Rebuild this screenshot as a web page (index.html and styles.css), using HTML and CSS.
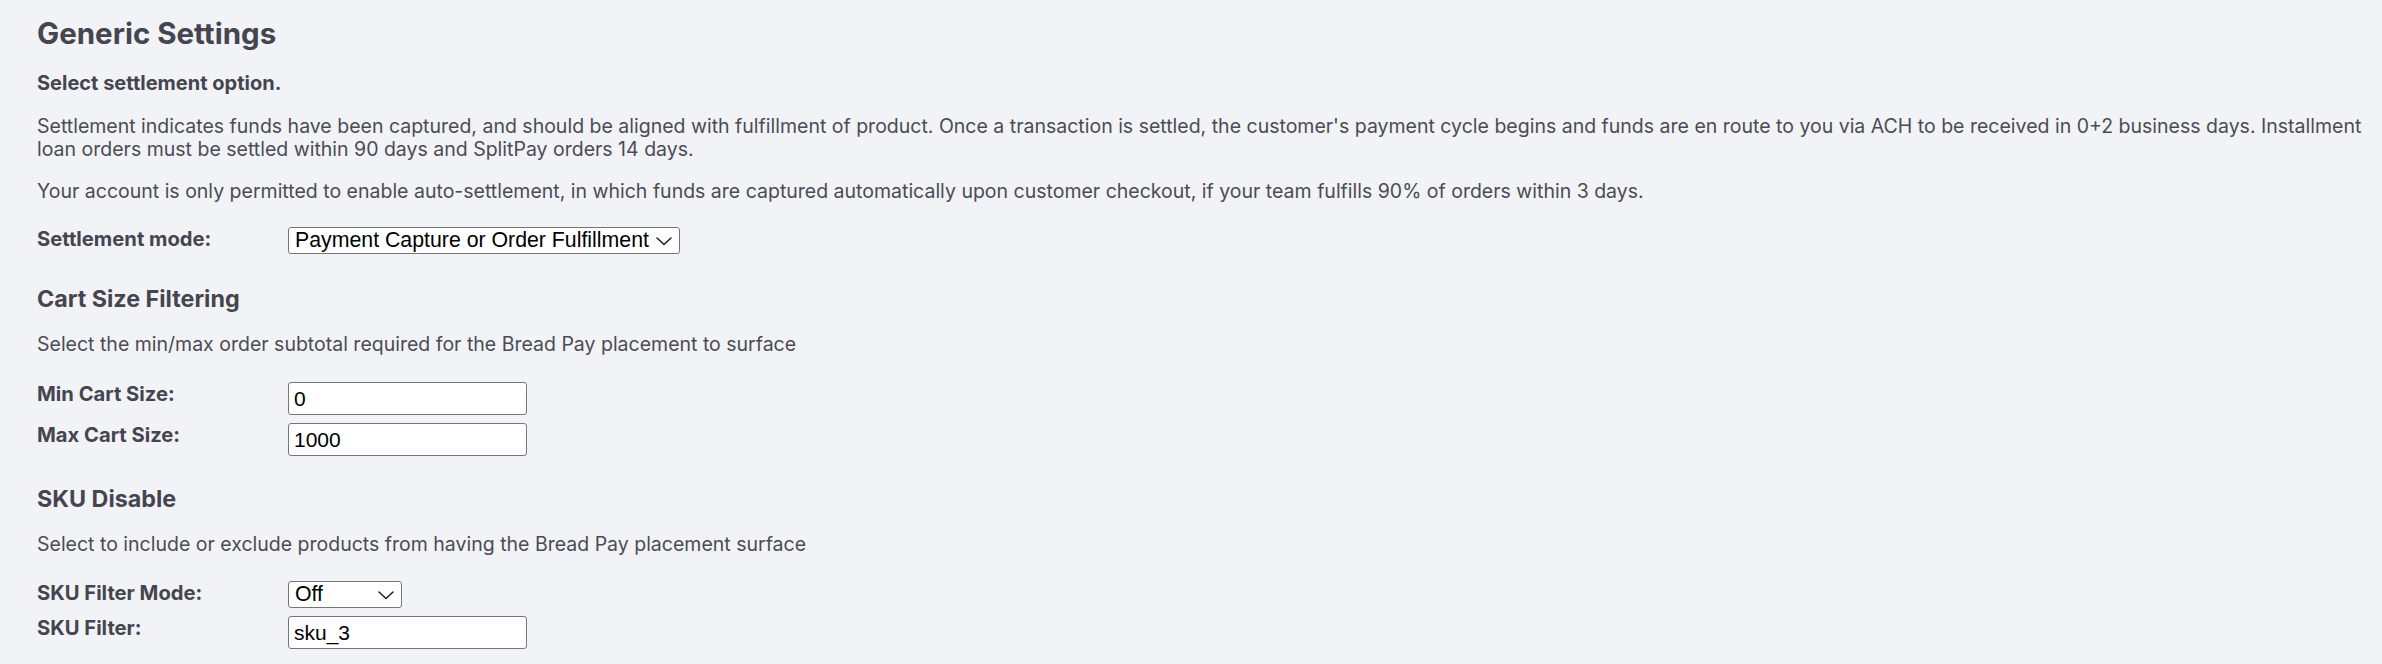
FILE: index.html
```html
<!DOCTYPE html>
<html lang="en">
<head>
<meta charset="utf-8">
<title>Generic Settings</title>
<link rel="stylesheet" href="styles.css">
</head>
<body>
<main class="page">
  <h1 class="title">Generic Settings</h1>
  <p class="lead">Select settlement option.</p>
  <p class="text text-first">Settlement indicates funds have been captured, and should be aligned with fulfillment of product. Once a transaction is settled, the customer's payment cycle begins and funds are en route to you via ACH to be received in 0+2 business days. Installment loan orders must be settled within 90 days and SplitPay orders 14 days.</p>
  <p class="text text-next">Your account is only permitted to enable auto-settlement, in which funds are captured automatically upon customer checkout, if your team fulfills 90% of orders within 3 days.</p>

  <div class="form-grid form-settlement">
    <label class="field-label" for="mode">Settlement mode:</label>
    <div class="select-wrap">
      <select id="mode" class="select select-wide">
        <option>Payment Capture or Order Fulfillment</option>
      </select>
      <svg class="chevron" width="16" height="9" viewBox="0 0 16 9" aria-hidden="true"><polyline points="1,1 8,7.5 15,1" fill="none" stroke="#1e1e1e" stroke-width="1.5" stroke-linecap="round" stroke-linejoin="round"/></svg>
    </div>
  </div>

  <h2 class="section-title">Cart Size Filtering</h2>
  <p class="text desc">Select the min/max order subtotal required for the Bread Pay placement to surface</p>

  <div class="form-grid form-fields">
    <label class="field-label" for="min">Min Cart Size:</label>
    <input id="min" class="input" type="text" value="0">
    <label class="field-label" for="max">Max Cart Size:</label>
    <input id="max" class="input" type="text" value="1000">
  </div>

  <h2 class="section-title section-sku">SKU Disable</h2>
  <p class="text desc">Select to include or exclude products from having the Bread Pay placement surface</p>

  <div class="form-grid form-fields form-sku">
    <label class="field-label" for="skumode">SKU Filter Mode:</label>
    <div class="select-wrap">
      <select id="skumode" class="select select-small">
        <option>Off</option>
      </select>
      <svg class="chevron" width="16" height="9" viewBox="0 0 16 9" aria-hidden="true"><polyline points="1,1 8,7.5 15,1" fill="none" stroke="#1e1e1e" stroke-width="1.5" stroke-linecap="round" stroke-linejoin="round"/></svg>
    </div>
    <label class="field-label" for="sku">SKU Filter:</label>
    <input id="sku" class="input" type="text" value="sku_3">
  </div>
</main>
</body>
</html>
```

FILE: styles.css
```css
html, body {
  margin: 0;
  padding: 0;
  background: #f2f3f7;
}

.page {
  padding: 16px 6px 0 37px;
  font-family: Inter, "Noto Sans", sans-serif;
  color: #4b4b55;
}

.title {
  margin: 0;
  font-size: 29.5px;
  line-height: 34px;
  font-weight: 700;
  color: #45454f;
}

.lead {
  margin: 22px 0 0;
  font-size: 20px;
  line-height: 23px;
  font-weight: 700;
  color: #45454f;
}

.text {
  margin: 0;
  font-size: 19.5px;
  line-height: 23px;
  font-weight: 400;
}

.text-first { margin-top: 20px; }
.text-next { margin-top: 19px; }

.section-title {
  margin: 31px 0 0;
  font-size: 23.3px;
  line-height: 27px;
  font-weight: 700;
  color: #45454f;
}

.section-sku { margin-top: 29px; }

.desc { margin-top: 21px; }

.form-grid {
  display: grid;
  grid-template-columns: 251px auto;
  justify-content: start;
  align-items: start;
  row-gap: 8px;
}

.form-settlement { margin-top: 24px; }
.form-fields { margin-top: 26px; }
.form-sku { margin-top: 25px; }

.field-label {
  font-size: 20.2px;
  line-height: 24px;
  font-weight: 700;
  color: #45454f;
}

.input {
  box-sizing: border-box;
  width: 239px;
  height: 33px;
  margin: 0;
  padding: 0 5px;
  border: 1px solid #767676;
  border-radius: 3px;
  background: #ffffff;
  color: #000000;
  font-family: "Liberation Sans", Arial, sans-serif;
  font-size: 21px;
  outline: none;
}

.select-wrap {
  position: relative;
  width: max-content;
}

.select {
  -webkit-appearance: none;
  appearance: none;
  box-sizing: border-box;
  height: 27px;
  margin: 0;
  padding: 0 26px 0 6px;
  border: 1px solid #767676;
  border-radius: 3px;
  background: #ffffff;
  color: #000000;
  font-family: "Liberation Sans", Arial, sans-serif;
  font-size: 21.3px;
  line-height: 25px;
}

.select-wide { width: 392px; }
.select-small { width: 114px; }

.chevron {
  position: absolute;
  right: 8px;
  top: 10px;
  pointer-events: none;
}
```
